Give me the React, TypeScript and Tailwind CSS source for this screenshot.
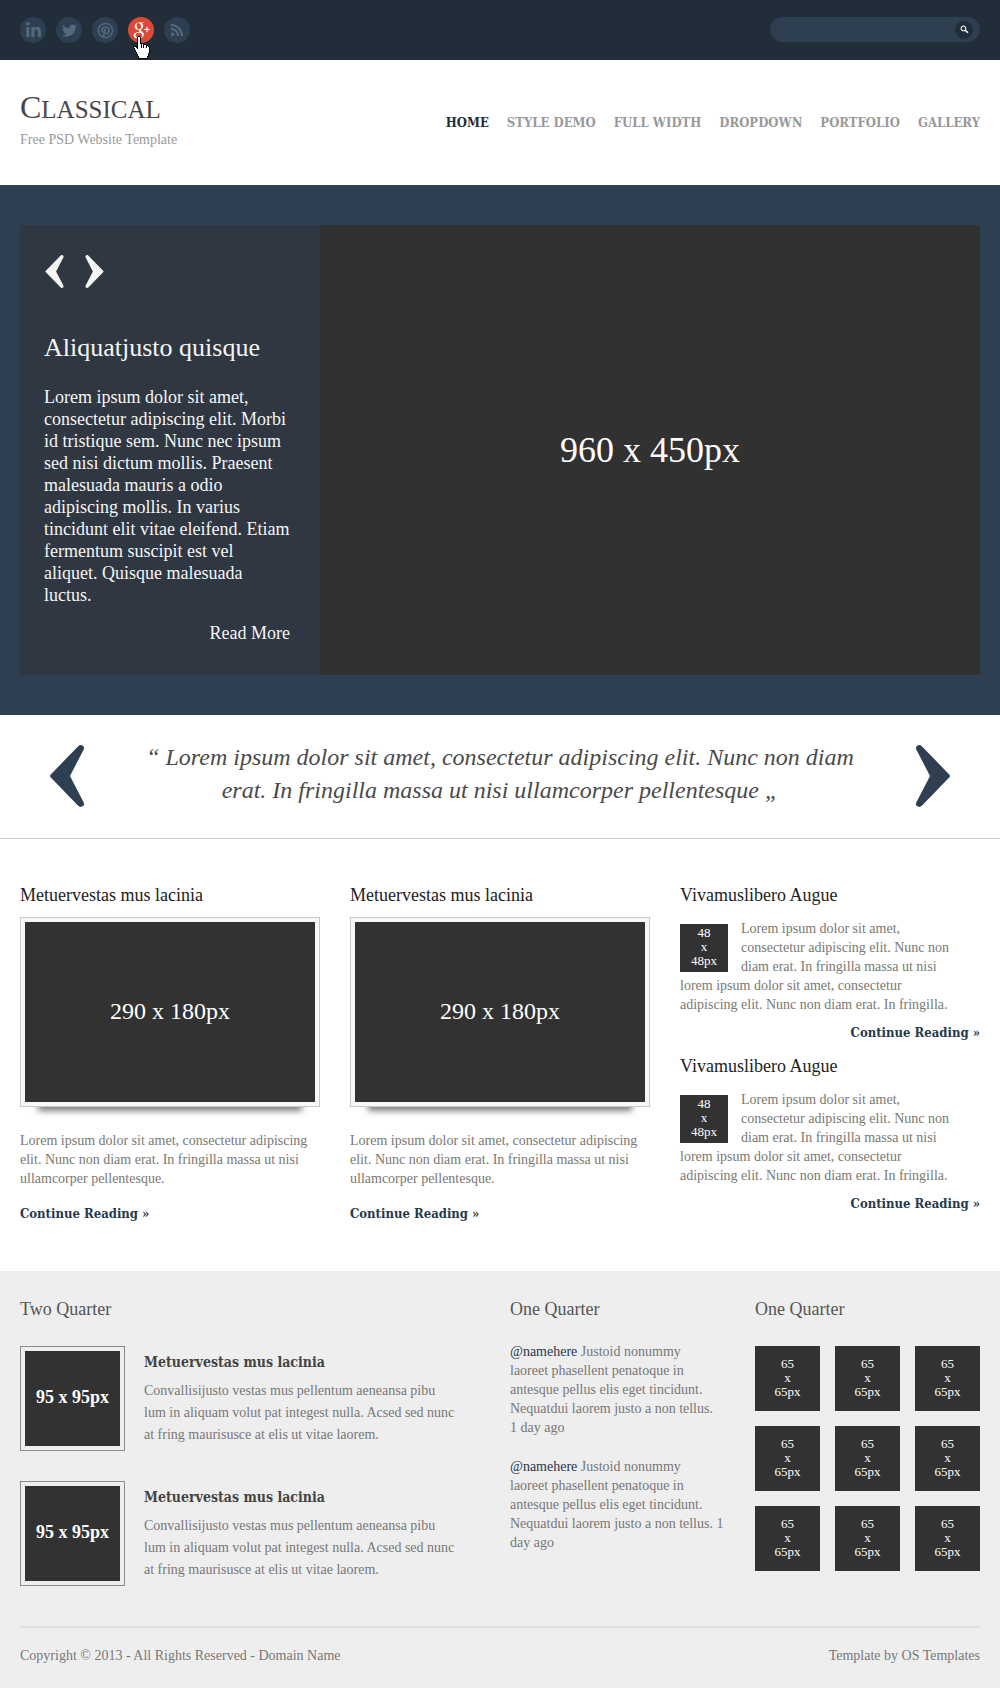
import React from "react";
import { FaLinkedinIn, FaTwitter, FaRss } from "react-icons/fa";
import { ImPinterest2 } from "react-icons/im";
import { TiSocialGooglePlus } from "react-icons/ti";

const serif = "font-['Liberation_Serif',Georgia,serif]";
const slab = "font-['DejaVu_Serif_Condensed','DejaVu_Serif',serif]";

const navItems = ["Home", "Style Demo", "Full Width", "Dropdown", "Portfolio", "Gallery"];

function HandCursor() {
  return (
    <svg
      viewBox="0 0 17 23"
      shapeRendering="crispEdges"
      className="pointer-events-none absolute top-[19px] left-[5px] h-[23px] w-[17px]"
      aria-hidden="true"
    >
      <path
        d="M5 0h2v1h1v6h2v1h3v1h2v1h1v1h1v6h-1v3h-1v3H5v-3H4v-2H3v-2H2v-2H1v-2H0v-2h3v1h1V1h1z"
        fill="#000"
      />
      <path
        d="M5 1h2v7h1v4h1V8h1v4h1V9h2v3h1v-2h1v1h1v6h-1v3h-1v2H6v-2H5v-2H4v-2H3v-2H2v-2H1v-1h2v1h1v1h1z"
        fill="#fff"
      />
    </svg>
  );
}

function SocialLinks() {
  const base = "flex size-[26px] items-center justify-center rounded-full";
  const idle = base + " bg-[#2e3f52] text-[#56687c]";
  return (
    <ul className="flex gap-2.5">
      <li>
        <a href="#linkedin" aria-label="LinkedIn" className={idle}>
          <FaLinkedinIn className="size-[17px]" />
        </a>
      </li>
      <li>
        <a href="#twitter" aria-label="Twitter" className={idle}>
          <FaTwitter className="size-[15px]" />
        </a>
      </li>
      <li>
        <a href="#pinterest" aria-label="Pinterest" className={idle}>
          <ImPinterest2 className="size-[15px] overflow-visible" strokeWidth={0.6} />
        </a>
      </li>
      <li className="relative">
        <a href="#google-plus" aria-label="Google Plus" className={base + " bg-[#db4a37] text-white"}>
          <TiSocialGooglePlus className="size-[26px]" />
        </a>
        <HandCursor />
      </li>
      <li>
        <a href="#rss" aria-label="RSS" className={idle}>
          <FaRss className="size-[14px]" />
        </a>
      </li>
    </ul>
  );
}

function SearchBox() {
  return (
    <form
      className="flex h-[25px] w-[210px] items-center rounded-full bg-[#2e3f52] pr-[7px] pl-3"
      onSubmit={(e) => e.preventDefault()}
    >
      <input
        type="search"
        aria-label="Search"
        className="min-w-0 flex-1 bg-transparent text-xs text-white outline-none"
      />
      <button
        type="submit"
        aria-label="Submit search"
        className="flex size-[18px] items-center justify-center rounded-full bg-[#222d3a] text-white"
      >
        <svg viewBox="0 0 10 10" className="size-[9px]" fill="none" stroke="currentColor">
          <circle cx="3.8" cy="3.8" r="2.6" strokeWidth="1.2" />
          <path d="M5.8 5.8 8.8 8.6" strokeWidth="1.8" />
        </svg>
      </button>
    </form>
  );
}

function Chevron({ flip, className }: { flip?: boolean; className: string }) {
  return (
    <svg viewBox="0 0 34 62" className={className} fill="currentColor" aria-hidden="true">
      <path
        transform={flip ? "translate(34 0) scale(-1 1)" : undefined}
        d="M28.2 1.2C29.6-.2 31.6-.2 33 .9c1.2 1 1.3 2.400.6 3.800L20 31l13.600 26.300c.7 1.400.6 2.800-.6 3.800-1.400 1.100-3.400 1.100-4.800-.3L.8 32.600c-1-1-1-2.200 0-3.200z"
      />
    </svg>
  );
}

function ContinueLink() {
  return (
    <a href="#continue" className={slab + " block text-[13px] leading-[19px] font-bold text-[#26384b]"}>
      Continue Reading »
    </a>
  );
}

function FeatureColumn() {
  return (
    <article>
      <h2 className="text-lg leading-6 text-[#222]">Metuervestas mus lacinia</h2>
      <figure className="relative mt-2.5">
        <div className="absolute inset-x-[18px] bottom-0 h-4 shadow-[0_4px_6px_rgba(0,0,0,0.5)]" />
        <div className="relative border border-[#c8c8c8] bg-[#f8f8f8] p-1">
          <div className="flex h-[180px] items-center justify-center bg-[#323232] pb-0.5 text-2xl text-white">
            290 x 180px
          </div>
        </div>
      </figure>
      <p className="mt-6 mb-4 text-sm leading-[19px] text-[#797872]">
        Lorem ipsum dolor sit amet, consectetur adipiscing elit. Nunc non diam erat. In fringilla massa ut nisi
        ullamcorper pellentesque.
      </p>
      <ContinueLink />
    </article>
  );
}

function SideArticle() {
  return (
    <article>
      <h2 className="text-lg leading-6 text-[#222]">Vivamuslibero Augue</h2>
      <div className="mt-3 pr-5 text-sm leading-[19px] text-[#797872]">
        <div className="float-left mt-[5px] mr-[13px] flex size-12 flex-col items-center justify-center bg-[#323232] pb-0.5 text-[13px] leading-[14px] text-white">
          <span>48</span>
          <span>x</span>
          <span>48px</span>
        </div>
        <p>
          Lorem ipsum dolor sit amet, consectetur adipiscing elit. Nunc non diam erat. In fringilla massa ut nisi
          lorem ipsum dolor sit amet, consectetur adipiscing elit. Nunc non diam erat. In fringilla.
        </p>
      </div>
      <div className="mt-[9px] flex justify-end">
        <ContinueLink />
      </div>
    </article>
  );
}

function FooterItem() {
  return (
    <li className="flex gap-[19px]">
      <div className="shrink-0 self-start border border-[#8c8c8c] p-1">
        <div className="flex size-[95px] items-center justify-center bg-[#323232] pb-1 text-lg font-bold text-white">
          95 x 95px
        </div>
      </div>
      <div className="pt-1.5 pr-[30px]">
        <h3 className={slab + " text-sm leading-5 font-bold text-[#444]"}>Metuervestas mus lacinia</h3>
        <p className="mt-2 text-sm leading-[22px]">
          Convallisijusto vestas mus pellentum aeneansa pibu lum in aliquam volut pat integest nulla. Acsed sed nunc
          at fring maurisusce at elis ut vitae laorem.
        </p>
      </div>
    </li>
  );
}

function NameLink() {
  return (
    <a href="#namehere" className="text-[#26384b]">
      @namehere
    </a>
  );
}

export default function App() {
  return (
    <div className={serif + " bg-white"}>
      <div className="flex items-start justify-between bg-[#222d3a] px-5 py-[17px]">
        <SocialLinks />
        <SearchBox />
      </div>

      <header className="flex items-start justify-between px-5 pt-[31px] pb-[35px]">
        <div>
          <h1 className="text-[25px] leading-9 text-[#484848] uppercase first-letter:text-[32px] first-letter:leading-none">
            Classical
          </h1>
          <p className="mt-0.5 text-sm leading-5 text-[#999]">Free PSD Website Template</p>
        </div>
        <nav className="pt-[22px]">
          <ul className={slab + " flex gap-[18px] text-[13px] leading-5 font-bold uppercase"}>
            {navItems.map((item, i) => (
              <li key={item}>
                <a href={"#" + item} className={i === 0 ? "text-[#1f2a37]" : "text-[#999]"}>
                  {item}
                </a>
              </li>
            ))}
          </ul>
        </nav>
      </header>

      <section className="bg-[#2e3f52] px-5 py-10">
        <div className="flex min-h-[450px]">
          <div className="w-[300px] bg-[#2f3842] pt-[30px] pr-[30px] pl-6 text-lg leading-[22px] text-[#f5f5f5]">
            <div className="flex gap-[21px] pl-px">
              <button type="button" aria-label="Previous slide">
                <Chevron className="h-[33px] w-[19px]" />
              </button>
              <button type="button" aria-label="Next slide">
                <Chevron flip className="h-[33px] w-[19px]" />
              </button>
            </div>
            <h2 className="mt-11 text-[26px] leading-8">Aliquatjusto quisque</h2>
            <p className="mt-[22px]">
              Lorem ipsum dolor sit amet, consectetur adipiscing elit. Morbi id tristique sem. Nunc nec ipsum sed nisi
              dictum mollis. Praesent malesuada mauris a odio adipiscing mollis. In varius tincidunt elit vitae
              eleifend. Etiam fermentum suscipit est vel aliquet. Quisque malesuada luctus.
            </p>
            <p className="mt-4 text-right">
              <a href="#read-more">Read More</a>
            </p>
          </div>
          <div className="flex flex-1 items-center justify-center bg-[#313131] text-4xl text-white">960 x 450px</div>
        </div>
      </section>

      <section className="flex items-end justify-between border-b border-[#ccc] px-[50px] pt-[26px] pb-[31px]">
        <button type="button" aria-label="Previous quote" className="text-[#2e3f52]">
          <Chevron className="h-[62px] w-[34px]" />
        </button>
        <blockquote className="flex-1 px-14 text-center text-2xl leading-[33px] text-[#4a4a4a] italic">
          “ Lorem ipsum dolor sit amet, consectetur adipiscing elit. Nunc non diam erat. In fringilla massa ut nisi
          ullamcorper pellentesque „
        </blockquote>
        <button type="button" aria-label="Next quote" className="text-[#2e3f52]">
          <Chevron flip className="h-[62px] w-[34px]" />
        </button>
      </section>

      <main className="grid grid-cols-3 gap-[30px] px-5 pt-11 pb-12">
        <FeatureColumn />
        <FeatureColumn />
        <div className="flex flex-col gap-3">
          <SideArticle />
          <SideArticle />
        </div>
      </main>

      <footer className="bg-[#eee] px-5 pt-[26px] pb-[22px] text-sm text-[#777]">
        <div className="grid grid-cols-4 gap-x-5">
          <section className="col-span-2">
            <h2 className="text-lg leading-6 text-[#555]">Two Quarter</h2>
            <ul className="mt-[25px] flex flex-col gap-[30px]">
              <FooterItem />
              <FooterItem />
            </ul>
          </section>
          <section>
            <h2 className="text-lg leading-6 text-[#555]">One Quarter</h2>
            <ul className="mt-[21px] flex flex-col gap-5 leading-[19px]">
              <li>
                <NameLink /> Justoid nonummy
                <br />
                laoreet phasellent penatoque in
                <br />
                antesque pellus elis eget tincidunt.
                <br />
                Nequatdui laorem justo a non tellus.
                <br />1 day ago
              </li>
              <li>
                <NameLink /> Justoid nonummy
                <br />
                laoreet phasellent penatoque in
                <br />
                antesque pellus elis eget tincidunt.
                <br />
                Nequatdui laorem justo a non tellus. 1
                <br />
                day ago
              </li>
            </ul>
          </section>
          <section>
            <h2 className="text-lg leading-6 text-[#555]">One Quarter</h2>
            <ul className="mt-[25px] grid grid-cols-3 gap-[15px]">
              {Array.from({ length: 9 }, (_, i) => (
                <li
                  key={i}
                  className="flex aspect-square flex-col items-center justify-center bg-[#323232] pb-0.5 text-[13px] leading-[14px] text-white"
                >
                  <span>65</span>
                  <span>x</span>
                  <span>65px</span>
                </li>
              ))}
            </ul>
          </section>
        </div>
        <div className="mt-10 flex justify-between border-t-2 border-[#dfdfdf] pt-[18px] leading-5">
          <p>Copyright © 2013 - All Rights Reserved - Domain Name</p>
          <p>
            Template by <a href="#os-templates">OS Templates</a>
          </p>
        </div>
      </footer>
    </div>
  );
}
